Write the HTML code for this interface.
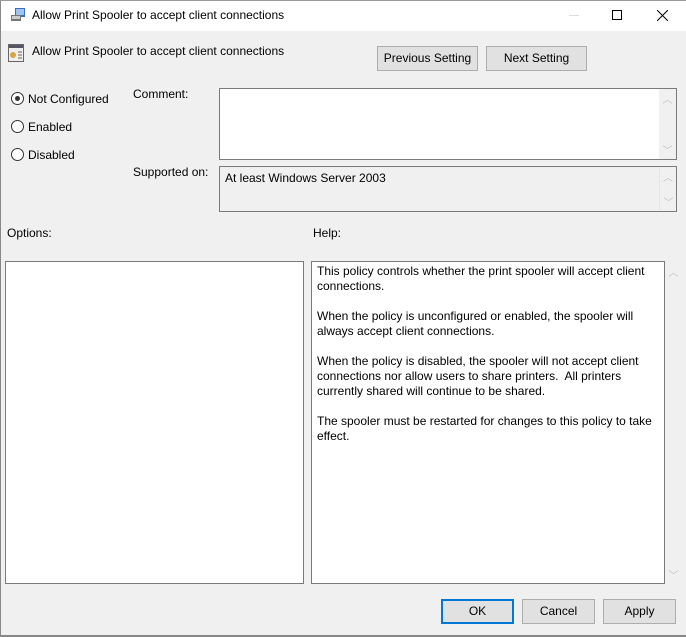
<!DOCTYPE html>
<html><head><style>
*{margin:0;padding:0;box-sizing:border-box}
body{width:686px;height:637px;background:#f0f0f0;font-family:"Liberation Sans",sans-serif;font-size:12px;color:#000;position:relative;overflow:hidden}
.a{position:absolute}
.btn{position:absolute;background:#e1e1e1;border:1px solid #adadad;text-align:center;line-height:23px;height:25px}
.box{position:absolute;border:1px solid #7a7a7a;background:#fff}
.rad{position:absolute;width:13px;height:13px;border:1px solid #333;border-radius:50%;background:#fff}
.sb{position:absolute;right:0;top:0;bottom:0;width:17px;background:#f0f0f0;color:#c0c0c0;font-size:10px;text-align:center}
</style></head><body>
<div class="a" style="left:0;top:0;width:686px;height:31px;background:#fff"></div>
<div class="a" style="left:0;top:0;width:1px;height:637px;background:#888"></div>
<div class="a" style="left:0;top:635px;width:686px;height:2px;background:#888"></div>
<div class="a" style="left:0;top:0;width:686px;height:1px;background:#999"></div>
<svg class="a" style="left:10px;top:7px" width="17" height="16"><rect x="5" y="1" width="10" height="9" fill="#3a6fc4"/><rect x="6" y="2" width="8" height="6" fill="#9cc4f0"/><rect x="1" y="8" width="10" height="6" fill="#777"/><rect x="2" y="9" width="8" height="3" fill="#ccc"/></svg>
<div class="a" style="left:32px;top:8px">Allow Print Spooler to accept client connections</div>
<div class="a" style="left:569px;top:15px;width:10px;height:1px;background:#ddd"></div>
<div class="a" style="left:612px;top:10px;width:10px;height:10px;border:1px solid #000"></div>
<svg class="a" style="left:657px;top:10px" width="11" height="11"><path d="M0 0L11 11M11 0L0 11" stroke="#000" stroke-width="1"/></svg>
<svg class="a" style="left:8px;top:44px" width="16" height="18"><rect x="0.5" y="0.5" width="15" height="17" fill="#eee" stroke="#666"/><rect x="1" y="1" width="14" height="3" fill="#556"/><circle cx="5" cy="11" r="3" fill="#d9a441"/><path d="M10 8h4M10 11h4M10 14h4" stroke="#666"/></svg>
<div class="a" style="left:32px;top:44px">Allow Print Spooler to accept client connections</div>
<div class="btn" style="left:377px;top:46px;width:101px">Previous Setting</div>
<div class="btn" style="left:486px;top:46px;width:101px">Next Setting</div>
<div class="rad" style="left:11px;top:92px"><div class="a" style="left:3px;top:3px;width:5px;height:5px;border-radius:50%;background:#333"></div></div>
<div class="a" style="left:28px;top:92px">Not Configured</div>
<div class="rad" style="left:11px;top:120px"></div>
<div class="a" style="left:28px;top:120px">Enabled</div>
<div class="rad" style="left:11px;top:148px"></div>
<div class="a" style="left:28px;top:148px">Disabled</div>
<div class="a" style="left:133px;top:87px">Comment:</div>
<div class="box" style="left:219px;top:88px;width:458px;height:72px"><div class="sb"><div style="margin-top:2px">︿</div><div style="position:absolute;bottom:2px;width:17px">﹀</div></div></div>
<div class="a" style="left:133px;top:165px">Supported on:</div>
<div class="box" style="left:219px;top:166px;width:458px;height:46px;background:#f0f0f0"><div class="a" style="left:5px;top:4px">At least Windows Server 2003</div><div class="sb" style="border-left:1px solid #e6e6e6"><div style="margin-top:2px">︿</div><div style="position:absolute;bottom:2px;width:17px">﹀</div></div></div>
<div class="a" style="left:7px;top:226px">Options:</div>
<div class="a" style="left:313px;top:226px">Help:</div>
<div class="box" style="left:5px;top:261px;width:299px;height:323px"></div>
<div class="box" style="left:311px;top:261px;width:354px;height:323px;padding:2px 5px;line-height:15px">This policy controls whether the print spooler will accept client connections.<br><br>When the policy is unconfigured or enabled, the spooler will always accept client connections.<br><br>When the policy is disabled, the spooler will not accept client connections nor allow users to share printers.&nbsp; All printers currently shared will continue to be shared.<br><br>The spooler must be restarted for changes to this policy to take effect.</div>
<div class="a" style="left:665px;top:261px;width:17px;height:323px;color:#c0c0c0;font-size:10px;text-align:center"><div style="margin-top:3px">︿</div><div style="position:absolute;bottom:2px;width:17px">﹀</div></div>
<div class="btn" style="left:441px;top:599px;width:73px;border:2px solid #0078d7;line-height:21px">OK</div>
<div class="btn" style="left:522px;top:599px;width:73px">Cancel</div>
<div class="btn" style="left:603px;top:599px;width:73px">Apply</div>
</body></html>
